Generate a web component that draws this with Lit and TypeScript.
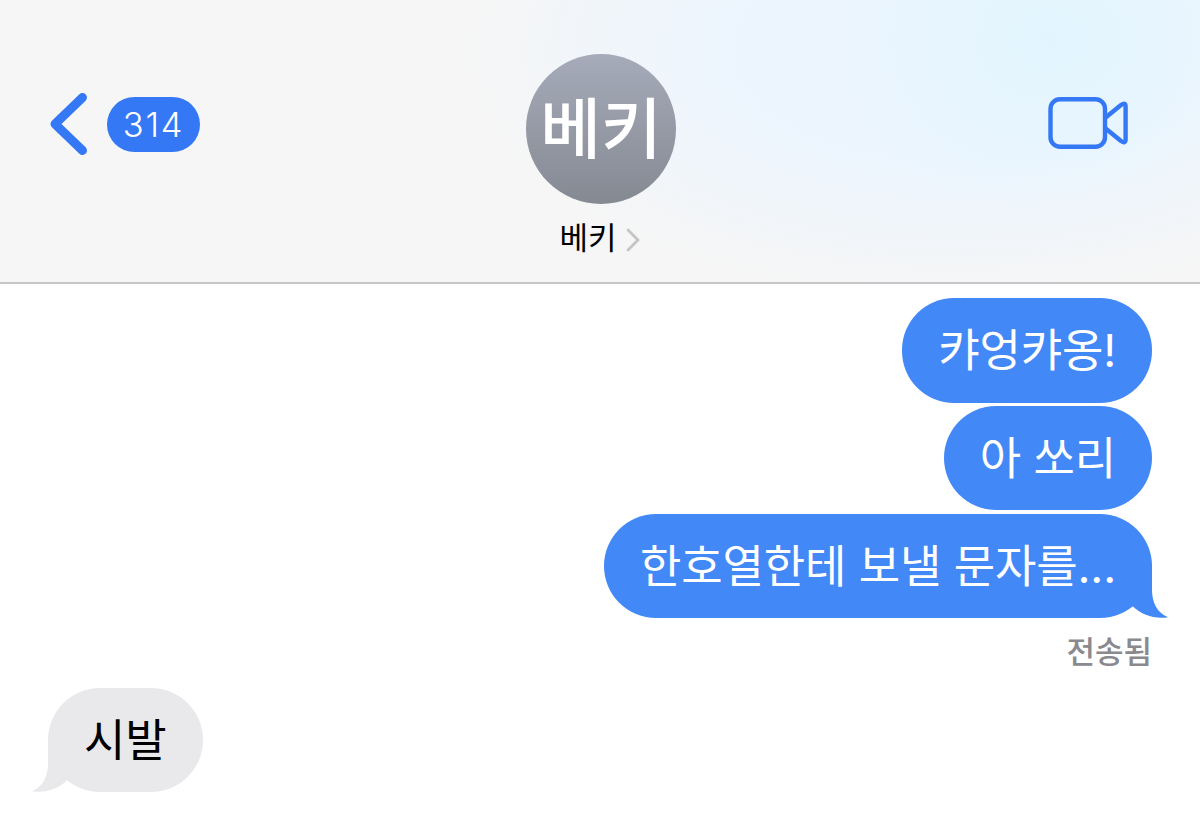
import { LitElement, html, css, nothing } from 'lit';
import { customElement, property } from 'lit/decorators.js';
import { classMap } from 'lit/directives/class-map.js';

interface Message {
    text: string;
    sent: boolean;
    tail?: boolean;
    status?: string;
}

const MESSAGES: Message[] = [
    { text: '캬엉캬옹!', sent: true },
    { text: '아 쏘리', sent: true },
    { text: '한호열한테 보낼 문자를...', sent: true, tail: true, status: '전송됨' },
    { text: '시발', sent: false, tail: true },
];

@customElement('chat-header')
export class ChatHeader extends LitElement {

    @property() name = '';
    @property({ type: Number }) unread = 0;

    static styles = css`
        :host {
            display: grid;
            grid-template-columns: 1fr 160px 1fr;
            box-sizing: border-box;
            height: 284px;
            border-bottom: 2px solid #c6c6c8;
            background:
                radial-gradient(ellipse 220px 180px at 1050px 40px, rgba(225, 245, 254, 0.9), rgba(228, 245, 254, 0) 100%),
                radial-gradient(ellipse 500px 250px at 960px 50px, rgba(236, 245, 254, 1) 45%, rgba(240, 245, 254, 0) 100%),
                #f6f6f6;
        }
        .back {
            display: flex;
            align-items: center;
            gap: 19px;
            height: 62px;
            margin: 93px 0 0 49px;
        }
        .badge {
            display: flex;
            align-items: center;
            justify-content: center;
            width: 93px;
            height: 55px;
            border-radius: 28px;
            background: #3478f6;
            color: white;
            font-size: 34.5px;
            font-weight: 350;
            letter-spacing: 1.7px;
        }
        .contact {
            display: flex;
            flex-direction: column;
            align-items: center;
            padding-top: 54px;
        }
        .avatar {
            display: flex;
            align-items: center;
            justify-content: center;
            width: 150px;
            height: 150px;
            margin-left: 2px;
            border-radius: 50%;
            background: linear-gradient(#a5abb9, #858992);
            color: white;
            font-size: 66px;
            font-weight: 500;
            line-height: 154px;
        }
        .name {
            display: flex;
            align-items: center;
            gap: 9px;
            height: 44px;
            margin: 12px 1px 0 0;
            color: black;
            font-size: 31px;
            line-height: 44px;
        }
        .name svg {
            margin-top: 4px;
        }
        .video {
            justify-self: end;
            margin: 96px 71px 0 0;
        }
        svg {
            display: block;
        }
    `;

    render() {
        return html`
        <div class="back">
            <svg width="39" height="62" viewBox="0 0 39 62" fill="none">
                <path d="M33.5 4.5L6 31L33.5 57.5" stroke="#3478f6" stroke-width="9" stroke-linecap="round" stroke-linejoin="round" />
            </svg>
            <div class="badge">${this.unread}</div>
        </div>
        <div class="contact">
            <div class="avatar">${this.name}</div>
            <div class="name">
                ${this.name}
                <svg width="14" height="24" viewBox="0 0 14 24" fill="none">
                    <path d="M2 2L12 12L2 22" stroke="#c4c4c7" stroke-width="2.8" stroke-linecap="round" stroke-linejoin="round" />
                </svg>
            </div>
        </div>
        <div class="video">
            <svg width="81" height="54" viewBox="0 0 81 54" fill="none" stroke="#3478f6" stroke-width="4.4" stroke-linejoin="round">
                <rect x="2.5" y="3.2" width="54.5" height="47.6" rx="9.5" />
                <path d="M57 22L73 9Q77.6 6 77.6 10.5V43.5Q77.6 48 73 45L57 32" />
            </svg>
        </div>
        `;
    }
}

@customElement('chat-bubble')
export class ChatBubble extends LitElement {

    @property() text = '';
    @property() status = '';
    @property({ type: Boolean }) sent = false;
    @property({ type: Boolean }) tail = false;

    static styles = css`
        :host {
            display: flex;
            flex-direction: column;
            align-items: flex-start;
        }
        :host([sent]) {
            align-items: flex-end;
        }
        .bubble {
            position: relative;
            box-sizing: border-box;
            height: 104.4px;
            padding: 0 36px;
            border-radius: 52px;
            background: #e9e9eb;
            color: black;
            font-size: 45px;
            letter-spacing: -0.14px;
            line-height: 106px;
            white-space: nowrap;
        }
        .sent {
            background: #4388f7;
            color: white;
        }
        .tail {
            position: absolute;
            left: -16px;
            bottom: 0;
            fill: #e9e9eb;
        }
        .text {
            position: relative;
        }
        .sent .tail {
            left: auto;
            right: -16px;
            fill: #4388f7;
            transform: scaleX(-1);
        }
        .status {
            margin-top: 12px;
            color: #8a8a8e;
            font-size: 31px;
            font-weight: 500;
            line-height: 44px;
        }
    `;

    // drawn for the left side, mirrored on sent bubbles
    renderTail() {
        return html`
        <svg class="tail" width="70" height="54" viewBox="0 0 70 54">
            <path d="M16 0V26C16 38 11 49 0 53.2C13 55.5 26 51 35 42.5L66 20L60 0Z" />
        </svg>
        `;
    }

    render() {
        return html`
        <div class=${classMap({ bubble: true, sent: this.sent })}>
            ${this.tail ? this.renderTail() : nothing}
            <span class="text">${this.text}</span>
        </div>
        ${this.status ? html`<div class="status">${this.status}</div>` : nothing}
        `;
    }
}

@customElement('app-root')
export class AppRoot extends LitElement {

    static styles = css`
        :host {
            display: block;
            height: 832px;
            overflow: hidden;
            background: white;
            font-family: Inter, "Noto Sans CJK KR", sans-serif;
        }
        .messages {
            display: flex;
            flex-direction: column;
            gap: 3.3px;
            padding: 14.4px 48px 0;
        }
        .received {
            margin-top: 10.5px;
        }
    `;

    render() {
        return html`
        <chat-header name="베키" unread="314"></chat-header>
        <div class="messages">
            ${MESSAGES.map((m) => html`
            <chat-bubble
                class=${classMap({ received: !m.sent })}
                .text=${m.text}
                .status=${m.status ?? ''}
                ?sent=${m.sent}
                ?tail=${m.tail}
            ></chat-bubble>`)}
        </div>
        `;
    }
}
